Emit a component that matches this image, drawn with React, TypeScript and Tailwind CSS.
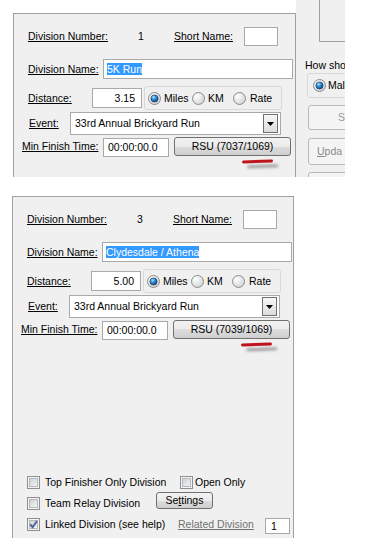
export default function App() {
  return (
    <div className="relative h-[549px] w-[375px] overflow-hidden bg-white font-['Liberation_Sans',Arial,sans-serif] text-[10.5px] leading-none text-black">
      {/* first capture */}
      <div className="flex h-[177px] pl-[13px]">
        <div className="mt-[13px] flex h-[164px] w-[283px] shrink-0 flex-col border-x border-t border-[#a0a0a0] bg-[#f0f0f0]">
          <DivisionForm num="1" name="5K Run" dist="3.15" rsu="RSU (7037/1069)" />
        </div>
        <SidePanel />
      </div>

      {/* second capture */}
      <div className="mt-[19px] pl-[12px]">
        <div className="flex h-[342px] w-[282px] flex-col border-x border-t border-[#a0a0a0] bg-[#f0f0f0]">
          <DivisionForm num="3" name="Clydesdale / Athena" dist="5.00" rsu="RSU (7039/1069)" />

          <div className="mt-[130px] flex flex-col gap-[8px]">
            <div className="flex h-[13px] items-center">
              <div className="ml-[14px]">
                <Check />
              </div>
              <span className="ml-[5px] w-[135px] shrink-0">Top Finisher Only Division</span>
              <Check />
              <span className="ml-[2px]">Open Only</span>
            </div>
            <div className="flex h-[13px] items-center">
              <div className="ml-[14px]">
                <Check />
              </div>
              <span className="ml-[5px] w-[111px] shrink-0">Team Relay Division</span>
              <button className="-mt-[6px] h-[17px] w-[57px] shrink-0 rounded-[3px] border border-[#707070] bg-[linear-gradient(#f2f2f2_0%,#ebebeb_50%,#dddddd_50%,#cfcfcf_100%)] text-[10.5px]">
                Se<span className="underline">t</span>tings
              </button>
            </div>
            <div className="flex h-[13px] items-center">
              <div className="ml-[14px]">
                <Check on />
              </div>
              <span className="ml-[5px] w-[133px] shrink-0">Linked Division (see help)</span>
              <span className="w-[87px] shrink-0 text-[#707070] underline">Related Division</span>
              <div className="mt-[3px] flex h-[16px] w-[25px] shrink-0 items-center border border-[#a9a9a9] bg-white pl-[5px]">
                1
              </div>
            </div>
          </div>
        </div>
      </div>
    </div>
  );
}

function DivisionForm({ num, name, dist, rsu }: { num: string; name: string; dist: string; rsu: string }) {
  return (
    <>
      <div className="mt-[13px] flex h-[19px] shrink-0 items-center">
        <span className="w-[124px] shrink-0 pl-[14px]">
          <span className="underline">Division Number:</span>
        </span>
        <span className="w-[36px] shrink-0">{num}</span>
        <span className="w-[70px] shrink-0">
          <span className="underline">Short Name:</span>
        </span>
        <div className="h-[19px] w-[34px] shrink-0 border border-[#a9a9a9] bg-white" />
      </div>

      <div className="mt-[13px] flex h-[20px] shrink-0 items-center">
        <span className="w-[89px] shrink-0 pl-[14px]">
          <span className="underline">Division Name:</span>
        </span>
        <div className="flex h-[20px] w-[190px] shrink-0 items-center border border-[#a9a9a9] bg-white pl-[3px]">
          <span className="bg-[#3399ff] py-[1px] text-white">{name}</span>
        </div>
      </div>

      <div className="mt-[7px] flex h-[24px] shrink-0 items-center">
        <span className="w-[78px] shrink-0 pl-[14px]">
          <span className="underline">Distance:</span>
        </span>
        <div className="flex h-[20px] w-[50px] shrink-0 items-center justify-end border border-[#a9a9a9] bg-white pr-[6px]">
          {dist}
        </div>
        <div className="ml-[2px] flex h-[24px] w-[138px] shrink-0 items-center rounded-[3px] border border-[#d6d9dc] pl-[3px]">
          <Radio on />
          <span className="ml-[3px] w-[28px]">Miles</span>
          <Radio />
          <span className="ml-[3px] w-[25px]">KM</span>
          <Radio />
          <span className="ml-[4px]">Rate</span>
        </div>
      </div>

      <div className="mt-[2px] flex h-[23px] shrink-0 items-center">
        <span className="w-[56px] shrink-0 pl-[15px]">
          <span className="underline">Event:</span>
        </span>
        <div className="flex h-[23px] w-[211px] shrink-0 items-center justify-between border border-[#a9a9a9] bg-white pl-[4px] pr-[2px]">
          <span>33rd Annual Brickyard Run</span>
          <div className="flex h-[19px] w-[15px] items-center justify-center border border-[#707070] bg-[linear-gradient(#f7f7f7,#dcdcdc)]">
            <svg width="7" height="4" viewBox="0 0 7 4">
              <path d="M0 0 H7 L3.5 4 Z" fill="#000" />
            </svg>
          </div>
        </div>
      </div>

      <div className="mt-[2px] flex h-[19px] shrink-0 items-center">
        <span className="w-[89px] shrink-0 pl-[8px]">
          <span className="underline">Min Finish Time:</span>
        </span>
        <div className="mt-[2px] flex h-[19px] w-[66px] shrink-0 items-center border border-[#a9a9a9] bg-white pl-[4px]">
          00:00:00.0
        </div>
        <button className="ml-[5px] h-[19px] w-[117px] shrink-0 rounded-[3px] border border-[#707070] bg-[linear-gradient(#f2f2f2_0%,#ebebeb_50%,#dddddd_50%,#cfcfcf_100%)] text-[10.5px]">
          {rsu}
        </button>
      </div>

      <div className="ml-[228px] mt-[4px] h-[3px] w-[31px] shrink-0 -rotate-2 rounded-full bg-[#c0141c] shadow-[5px_5px_3px_rgba(0,0,0,0.35)]" />
    </>
  );
}

function SidePanel() {
  return (
    <div className="flex h-[177px] w-[49px] shrink-0 flex-col overflow-hidden bg-[#f0f0f0]">
      <div className="ml-[23px] h-[42px] w-[60px] shrink-0 border-b border-l border-[#a0a0a0]" />
      <div className="mt-[17px] h-[12px] shrink-0 whitespace-nowrap pl-[9px] leading-[12px]">How sho</div>
      <div className="ml-[11px] mt-[2px] flex h-[25px] w-[70px] shrink-0 items-center rounded-[3px] border border-[#d6d9dc] pl-[5px]">
        <Radio on />
        <span className="ml-[2px] whitespace-nowrap">Mal</span>
      </div>
      <div className="ml-[12px] mt-[7px] flex h-[25px] w-[70px] shrink-0 items-center rounded-[3px] border border-[#b9b9b9] bg-[#f4f4f4] pl-[29px] text-[#9a9a9a]">
        S
      </div>
      <div className="ml-[12px] mt-[8px] flex h-[27px] w-[70px] shrink-0 items-center rounded-[3px] border border-[#b9b9b9] bg-[#f4f4f4] pl-[8px] text-[#8a8a8a]">
        <span className="underline">U</span>pda
      </div>
      <div className="ml-[12px] mt-[7px] h-[25px] w-[70px] shrink-0 rounded-[3px] border border-[#b9b9b9] bg-[#f4f4f4]" />
    </div>
  );
}

function Radio({ on = false }: { on?: boolean }) {
  return (
    <svg width="13" height="13" viewBox="0 0 13 13" className="shrink-0">
      <defs>
        <radialGradient id="rbOuter" cx="0.35" cy="0.3" r="0.8">
          <stop offset="0" stopColor="#ffffff" />
          <stop offset="1" stopColor="#cdd0d3" />
        </radialGradient>
        <radialGradient id="rbInner" cx="0.38" cy="0.32" r="0.75">
          <stop offset="0" stopColor="#a8e4ff" />
          <stop offset="0.45" stopColor="#2c8ad4" />
          <stop offset="1" stopColor="#0c3c72" />
        </radialGradient>
      </defs>
      <circle cx="6.5" cy="6.5" r="6" fill="url(#rbOuter)" stroke="#8c8c8c" />
      {on && <circle cx="6.5" cy="6.5" r="3.6" fill="url(#rbInner)" stroke="#1f3f66" strokeWidth="0.7" />}
    </svg>
  );
}

function Check({ on = false }: { on?: boolean }) {
  return (
    <svg width="13" height="13" viewBox="0 0 13 13" className="shrink-0">
      <defs>
        <linearGradient id="cbInner" x1="0" y1="0" x2="1" y2="1">
          <stop offset="0" stopColor="#cbcfd4" />
          <stop offset="1" stopColor="#f7f7f7" />
        </linearGradient>
      </defs>
      <rect x="0.5" y="0.5" width="12" height="12" fill="#f4f4f4" stroke="#8e8f8f" />
      <rect x="2.5" y="2.5" width="8" height="8" fill="url(#cbInner)" stroke="#b4b8bd" />
      {on && <path d="M3.2 6.4 L5.6 9.2 L10 3" fill="none" stroke="#4b5f96" strokeWidth="1.9" />}
    </svg>
  );
}
